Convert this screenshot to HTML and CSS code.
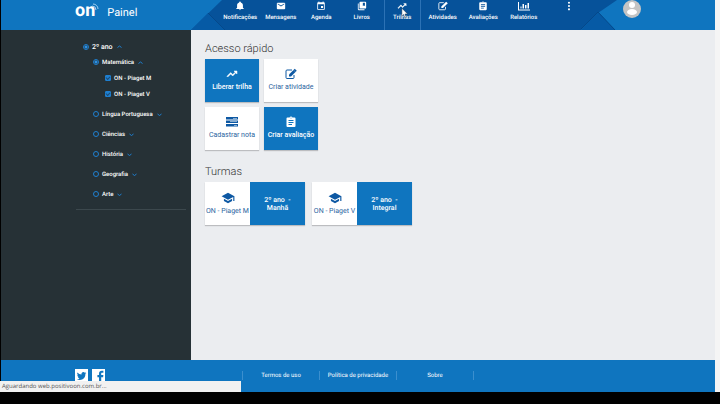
FILE: index.html
```html
<!DOCTYPE html>
<html lang="pt-BR">
  <head>
    <meta charset="UTF-8" />
    <meta name="viewport" content="width=device-width, initial-scale=1.0" />
    <title>Painel</title>
    <link rel="stylesheet" href="styles.css">
  </head>
  <body>
    <svg width="0" height="0" class="sprite" aria-hidden="true">
      <symbol id="i-trend" viewBox="0 0 24 24"><path d="M16 6l2.3 2.3-4.900 4.900-4-4L2 16.600 3.400 18l6-6 4 4 6.300-6.300L22 12V6z" stroke="currentColor" /></symbol>
      <symbol id="i-edit" viewBox="0 0 24 24">
        <path d="M18 14v5a2 2 0 0 1-2 2H4a2 2 0 0 1-2-2V6a2 2 0 0 1 2-2h10" fill="none" stroke="currentColor" stroke-width="2" />
        <path d="M8 17v-4L19.500 1.500l4 4L12 17z" />
        <path d="M17 4l4 4" stroke="#fff" stroke-opacity=".5" />
      </symbol>
      <symbol id="i-clip" viewBox="0 0 24 24"><path fill-rule="evenodd" d="M19 3h-4.200a3 3 0 0 0-5.600 0H5a2 2 0 0 0-2 2v15a2 2 0 0 0 2 2h14a2 2 0 0 0 2-2V5a2 2 0 0 0-2-2zm-7 0a1 1 0 1 1 0 2 1 1 0 0 1 0-2zM7 8h10v2H7zm0 4h10v2H7zm0 4h7v2H7z" /></symbol>
      <symbol id="i-school" viewBox="0 0 24 24"><path d="M5 13.200v4L12 21l7-3.800v-4L12 17zM12 3L1 9l11 6 9-4.900V17h2V9z" /></symbol>
      <symbol id="i-up" viewBox="0 0 10 10"><path d="M1 7l4-3 4 3" fill="none" stroke="currentColor" stroke-width="2" /></symbol>
      <symbol id="i-down" viewBox="0 0 10 10"><path d="M1 4l4 3 4-3" fill="none" stroke="currentColor" stroke-width="2" /></symbol>
    </svg>

    <header class="header">
      <div class="brand">
        <a href="#" class="logo" aria-label="on">on
          <svg class="waves" viewBox="0 0 8 8"><path d="M1 3a4 4 0 0 1 4 4M2 1a5 5 0 0 1 5 5" /></svg>
        </a>
        <span class="page-title">Painel</span>
      </div>
      <svg class="fold-left" viewBox="0 0 34 30" aria-hidden="true">
        <path d="M31 0H34V30H0z" fill="#06529a" />
        <path d="M17 13L34 30H0z" fill="#065aa5" />
        <path d="M17 13L34 30" stroke="#05488a" />
      </svg>
      <nav class="nav">
        <a href="#" class="nav-item">
          <svg class="icon" viewBox="0 0 24 24"><path d="M12 22a2 2 0 0 0 2-2h-4a2 2 0 0 0 2 2zm7-6v-6c0-3-2-5.600-5-6.400V3a2 2 0 0 0-4 0v.6C7 4.400 5 7 5 10v6l-2 2v1h18v-1z" /></svg>
          Notificações
        </a>
        <a href="#" class="nav-item">
          <svg class="icon" viewBox="0 0 24 24"><path d="M20 4H4a2 2 0 0 0-2 2v12a2 2 0 0 0 2 2h16a2 2 0 0 0 2-2V6a2 2 0 0 0-2-2zm0 4l-8 5-8-5V6l8 5 8-5z" /></svg>
          Mensagens
        </a>
        <a href="#" class="nav-item">
          <svg class="icon" viewBox="0 0 24 24"><path fill-rule="evenodd" d="M17 12h-5v5h5zM16 1v2H8V1H6v2H5a2 2 0 0 0-2 2v14a2 2 0 0 0 2 2h14a2 2 0 0 0 2-2V5a2 2 0 0 0-2-2h-1V1zm3 18H5V8h14z" /></svg>
          Agenda
        </a>
        <a href="#" class="nav-item">
          <svg class="icon" viewBox="0 0 24 24"><path fill-rule="evenodd" d="M4 6H2v14a2 2 0 0 0 2 2h14v-2H4zM20 2H8a2 2 0 0 0-2 2v12a2 2 0 0 0 2 2h12a2 2 0 0 0 2-2V4a2 2 0 0 0-2-2zm-1 10l-2.500-1.500L14 12V4h5z" /></svg>
          Livros
        </a>
        <a href="#" class="nav-item active">
          <svg class="icon"><use href="#i-trend" /></svg>
          Trilhas
          <svg class="pointer" viewBox="0 0 8 12"><path d="M1 0v9l2-2 1.500 4 1.500-.7L4.500 6.500H7.500z" fill="#fff" stroke="#234" stroke-width=".5" /></svg>
        </a>
        <a href="#" class="nav-item">
          <svg class="icon"><use href="#i-edit" /></svg>
          Atividades
        </a>
        <a href="#" class="nav-item">
          <svg class="icon"><use href="#i-clip" /></svg>
          Avaliações
        </a>
        <a href="#" class="nav-item">
          <svg class="icon wide" viewBox="0 0 24 20"><path d="M0 2h2v15h22v2H0zM5 11h2v4H5zM9 6h3v9H9zM14 8h3v7h-3zM19 4h3v11h-3z" /></svg>
          Relatórios
        </a>
      </nav>
      <button class="more" aria-label="Mais opções">
        <svg class="icon" viewBox="0 0 24 24"><circle cx="12" cy="4" r="2.500" /><circle cx="12" cy="12" r="2.500" /><circle cx="12" cy="20" r="2.500" /></svg>
      </button>
      <svg class="fold-right" viewBox="0 0 36 30" aria-hidden="true">
        <path d="M0 0H36L17 13 0 30z" fill="#06529a" />
        <path d="M17 12L34 30H0z" fill="#065aa5" />
        <path d="M0 29L17 12L34 30" fill="none" stroke="#05488a" />
      </svg>
      <button class="avatar" aria-label="Perfil">
        <svg viewBox="0 0 18 18"><circle cx="9" cy="9" r="9" fill="#c4c4c4" /><circle cx="9" cy="5" r="3" fill="#fff" /><ellipse cx="9" cy="12" rx="5" ry="3" fill="#fff" /></svg>
      </button>
    </header>

    <div class="content">
      <aside class="sidebar">
        <div class="tree">
          <div class="row year">
            <label><input type="radio" name="ano" checked />2º ano</label>
            <button class="toggle" aria-label="Recolher 2º ano"><svg><use href="#i-up" /></svg></button>
          </div>
          <div class="row subject open">
            <label><input type="radio" name="materia" checked />Matemática</label>
            <button class="toggle" aria-label="Recolher Matemática"><svg><use href="#i-up" /></svg></button>
          </div>
          <div class="row group"><label><input type="checkbox" checked />ON - Piaget M</label></div>
          <div class="row group"><label><input type="checkbox" checked />ON - Piaget V</label></div>
          <div class="row subject">
            <label><input type="radio" name="materia" />Língua Portuguesa</label>
            <button class="toggle" aria-label="Expandir Língua Portuguesa"><svg><use href="#i-down" /></svg></button>
          </div>
          <div class="row subject">
            <label><input type="radio" name="materia" />Ciências</label>
            <button class="toggle" aria-label="Expandir Ciências"><svg><use href="#i-down" /></svg></button>
          </div>
          <div class="row subject">
            <label><input type="radio" name="materia" />História</label>
            <button class="toggle" aria-label="Expandir História"><svg><use href="#i-down" /></svg></button>
          </div>
          <div class="row subject">
            <label><input type="radio" name="materia" />Geografia</label>
            <button class="toggle" aria-label="Expandir Geografia"><svg><use href="#i-down" /></svg></button>
          </div>
          <div class="row subject">
            <label><input type="radio" name="materia" />Arte</label>
            <button class="toggle" aria-label="Expandir Arte"><svg><use href="#i-down" /></svg></button>
          </div>
        </div>
      </aside>

      <main class="main">
        <section>
          <h2>Acesso rápido</h2>
          <div class="shortcuts">
            <button class="card blue"><svg class="icon"><use href="#i-trend" /></svg>Liberar trilha</button>
            <button class="card"><svg class="icon"><use href="#i-edit" /></svg>Criar atividade</button>
            <button class="card">
              <svg class="icon" viewBox="0 0 24 20"><path d="M0 0h24v5H0zM0 7h24v5H0zM0 14h24v5H0z" /><path d="M14 2h8v1h-8zM8 9h14v1H8zM16 16h6v1h-6z" fill="#fff" /></svg>
              Cadastrar nota
            </button>
            <button class="card blue"><svg class="icon"><use href="#i-clip" /></svg>Criar avaliação</button>
          </div>
        </section>
        <section>
          <h2>Turmas</h2>
          <div class="classes">
            <a href="#" class="class-card">
              <span class="class-name"><svg class="icon"><use href="#i-school" /></svg>ON - Piaget M</span>
              <span class="class-info">2º ano &nbsp;-<br />Manhã</span>
            </a>
            <a href="#" class="class-card">
              <span class="class-name"><svg class="icon"><use href="#i-school" /></svg>ON - Piaget V</span>
              <span class="class-info">2º ano &nbsp;-<br />Integral</span>
            </a>
          </div>
        </section>
      </main>
    </div>

    <footer class="footer">
      <div class="social">
        <a href="#" aria-label="Twitter"><svg viewBox="0 0 24 24"><path d="M21 7.500c-.6.300-1.300.5-2 .6.700-.5 1.200-1.200 1.500-2-.7.400-1.400.7-2.300.9a3.600 3.600 0 0 0-6.200 3.300C9 10.100 6.400 8.700 4.600 6.500c-1 1.700-.5 3.800 1.100 4.900-.6 0-1.100-.2-1.600-.5 0 1.700 1.200 3.300 2.900 3.600-.5.100-1.100.2-1.600.1.500 1.400 1.800 2.400 3.300 2.500A7.300 7.300 0 0 1 3.400 18.600 10.300 10.300 0 0 0 19.200 9.400c.7-.5 1.300-1.200 1.800-1.900z" /></svg></a>
        <a href="#" aria-label="Facebook"><svg viewBox="0 0 24 24"><path d="M13 24v-9h-3v-4h3V8c0-3.300 2-5 5-5h3v4h-2.500C17.300 7 17 7.700 17 8.500V11h4l-.5 4H17v9z" /></svg></a>
      </div>
      <ul class="links">
        <li><a href="#">Termos de uso</a></li>
        <li><a href="#">Política de privacidade</a></li>
        <li><a href="#">Sobre</a></li>
      </ul>
    </footer>

    <div class="status">Aguardando web.positivoon.com.br...</div>
  </body>
</html>
```

FILE: styles.css
```css
* {
  box-sizing: border-box;
}

html {
  background: #000;
}

body {
  margin: 0;
  padding: 0 0 12px 1px;
  min-height: 100vh;
  display: flex;
  flex-direction: column;
  font-family: Roboto, sans-serif;
  font-size: 7px;
  text-rendering: geometricPrecision;
  background: #000;
  color: #fff;
}

a {
  color: inherit;
  text-decoration: none;
}

button {
  font: inherit;
  color: inherit;
  background: none;
  border: 0;
  padding: 0;
  cursor: pointer;
}

svg {
  display: block;
  fill: currentColor;
}

.sprite {
  position: absolute;
}

.icon {
  width: 10px;
  height: 10px;
}

/* header */
.header {
  display: flex;
  height: 30px;
  background: #0f75bf;
  border-right: 5px solid #f5f5f5;
}

.brand {
  display: flex;
  gap: 8px;
  width: 190px;
  padding-left: 74px;
}

.logo {
  display: flex;
  font-size: 18px;
  font-weight: 700;
  line-height: 22px;
}

.waves {
  width: 8px;
  height: 8px;
  margin: 3px 0 0 -4px;
  fill: none;
  stroke: #9fd0f2;
}

.page-title {
  font-size: 11px;
  line-height: 26px;
}

.fold-left {
  width: 34px;
  flex: none;
  margin-right: -5px;
}

.nav {
  display: grid;
  grid-template-columns: repeat(8, 1fr);
  width: 324px;
  background: linear-gradient(90deg, transparent 5px, #06529a 5px);
}

.nav-item {
  position: relative;
  display: flex;
  flex-direction: column;
  align-items: center;
  gap: 2px;
  padding-top: 1px;
  font-size: 6px;
  font-weight: 500;
  line-height: 10px;
}

.nav-item.active {
  margin: 0 2px;
  border: solid #2c72b5;
  border-width: 0 1px;
}

.icon.wide {
  width: 12px;
}

.pointer {
  position: absolute;
  left: 16px;
  top: 8px;
  width: 7px;
  height: 11px;
}

.more {
  display: flex;
  justify-content: center;
  width: 37px;
  padding: 1px 0 0 12px;
  background: #06529a;
}

.fold-right {
  width: 36px;
  flex: none;
}

.avatar {
  width: 18px;
  height: 18px;
  margin-left: 6px;
}

/* content */
.content {
  flex: 1;
  display: flex;
  background: #ebedf0;
  border-right: 5px solid #f5f5f5;
}

.sidebar {
  width: 190px;
  padding: 9px 5px 0 75px;
  background: #263136;
}

.tree {
  padding-bottom: 5px;
  border-bottom: 1px solid #3c484d;
}

.row {
  display: flex;
  align-items: center;
  gap: 4px;
  height: 20px;
  font-size: 6px;
  font-weight: 500;
}

.row label {
  display: flex;
  align-items: center;
  gap: 3px;
}

.row.year {
  height: 15px;
  padding-left: 7px;
  font-size: 7px;
}

.row.subject {
  padding-left: 17px;
}

.row.open,
.row.group {
  height: 16px;
}

.row.group {
  padding-left: 29px;
}

.row.group + .subject {
  margin-top: 2px;
}

.row input {
  appearance: none;
  width: 6px;
  height: 6px;
  margin: 0;
  border: 1px solid #1e7fd0;
  border-radius: 50%;
}

.row input:checked {
  background: radial-gradient(circle, #2b90e4 1px, transparent 2px);
}

.row input[type='checkbox'] {
  position: relative;
  border-radius: 1px;
  background: #1e7fd0;
}

.row input[type='checkbox']::after {
  content: '';
  position: absolute;
  box-sizing: border-box;
  left: 0;
  top: 0;
  width: 4px;
  height: 3px;
  border: solid #1b4a73;
  border-width: 0 0 1px 1px;
  transform: rotate(-45deg);
}

.toggle svg {
  width: 5px;
  height: 5px;
  color: #1e7fd0;
}

.main {
  flex: 1;
  padding: 10px 14px;
}

.main section {
  margin-bottom: 13px;
}

h2 {
  margin: 0 0 2px;
  font-size: 11px;
  font-weight: 300;
  line-height: 17px;
  color: #333;
}

.shortcuts {
  display: grid;
  grid-template-columns: 54px 54px;
  gap: 5px;
}

.card {
  display: flex;
  flex-direction: column;
  align-items: center;
  gap: 2px;
  height: 43px;
  padding-top: 9px;
  line-height: 10px;
  background: #fff;
  color: #2a64a0;
  box-shadow: 0 1px 1px rgba(0, 0, 0, 0.2);
}

.card .icon {
  width: 12px;
  height: 12px;
  color: #0d58a3;
}

.card.blue {
  background: #0f75bf;
  color: #fff;
  font-weight: 500;
}

.card.blue .icon {
  color: #fff;
}

.classes {
  display: flex;
  gap: 7px;
}

.class-card {
  display: flex;
  height: 43px;
  box-shadow: 0 1px 1px rgba(0, 0, 0, 0.2);
}

.class-name {
  display: flex;
  flex-direction: column;
  align-items: center;
  width: 45px;
  padding-top: 9px;
  line-height: 10px;
  white-space: nowrap;
  background: #fff;
  color: #2a64a0;
}

.class-name .icon {
  width: 14px;
  height: 14px;
  margin-bottom: 1px;
  color: #0d58a3;
}

.class-info {
  width: 55px;
  padding-top: 14px;
  font-weight: 500;
  line-height: 8px;
  text-align: center;
  background: #0f75bf;
}

/* footer */
.footer {
  display: flex;
  align-items: center;
  height: 32px;
  padding-bottom: 1px;
  background: #0f75bf;
  border-right: 5px solid #f5f5f5;
}

.social {
  display: flex;
  gap: 4px;
  width: 241px;
  padding-left: 74px;
}

.social a {
  background: #fff;
  color: #0f75bf;
}

.social svg {
  width: 13px;
  height: 13px;
}

.links {
  display: flex;
  margin: 0;
  padding: 0;
  list-style: none;
  font-size: 6px;
  line-height: 9px;
  text-align: center;
  border-left: 1px solid #3b8fce;
}

.links li {
  width: 77px;
  border-right: 1px solid #3b8fce;
}

/* browser loading bar */
.status {
  position: fixed;
  left: 0;
  bottom: 12px;
  width: 241px;
  height: 11px;
  padding-left: 2px;
  font-family: "Open Sans", sans-serif;
  font-size: 6px;
  line-height: 11px;
  background: #f1f1f1;
  color: #555;
}
```
